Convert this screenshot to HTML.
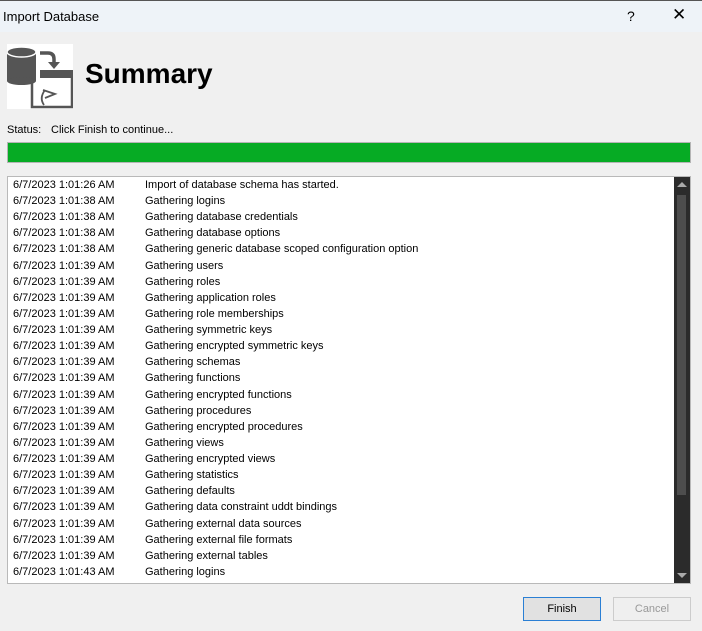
<!DOCTYPE html><html><head><style>
body{margin:0;width:702px;height:631px;background:#f0f0f0;font-family:"Liberation Sans",sans-serif;position:relative;overflow:hidden}
.t{position:absolute;left:0;top:0;width:702px;height:31px;background:#eef3f8;border-top:1px solid #555}
.a{position:absolute}
.list{position:absolute;left:7px;top:176px;width:682px;height:406px;background:#fff;border:1px solid #b9b9b9}
.r{position:absolute;font-size:11px;color:#000;white-space:nowrap}
.btn{position:absolute;top:597px;width:76px;height:22px;border:1px solid #ccc;background:#e5e5e5;font-size:11px;text-align:center;line-height:22px}
</style></head><body>
<div class="t"><span class="a" style="left:3px;top:8px;font-size:13px">Import Database</span>
<span class="a" style="left:627px;top:7px;font-size:14px">?</span>
<span class="a" style="left:672px;top:4px;font-size:17px">✕</span></div>
<div class="a" style="left:7px;top:44px;width:66px;height:65px;background:#fff">
<svg width="66" height="65">
<rect x="0" y="8" width="29" height="29" fill="#555"/><ellipse cx="14.5" cy="37" rx="14.5" ry="4" fill="#555"/><ellipse cx="14.5" cy="8" rx="14.5" ry="5" fill="#555" stroke="#fff" stroke-width="1.5"/>
<path d="M33 9h8q6 0 6 6v4" stroke="#555" stroke-width="3.5" fill="none"/><path d="M41 18h12l-6 7z" fill="#555"/>
<rect x="33" y="26" width="33" height="8" fill="#555"/>
<path d="M25 36v27h40V34" stroke="#555" stroke-width="2.5" fill="none"/>
<path d="M36 46l12 4-10 4" stroke="#555" stroke-width="1.8" fill="none"/><path d="M38 46q-6 8-1 15" stroke="#555" stroke-width="1.8" fill="none"/></svg></div>
<div class="a" style="left:85px;top:58px;font-size:28px;font-weight:bold">Summary</div>
<div class="a" style="left:7px;top:124px;font-size:11px">Status:</div>
<div class="a" style="left:51px;top:124px;font-size:11px">Click Finish to continue...</div>
<div class="a" style="left:7px;top:142px;width:682px;height:19px;background:#06ab24;border:1px solid #b5b5b5"></div>
<div class="list">
<div class="a" style="left:666px;top:0;width:16px;height:406px;background:#2b2b2b"><div class="a" style="left:3px;top:18px;width:9px;height:300px;background:#4d4d4d"></div>
<div class="a" style="left:3px;top:5px;border:5px solid transparent;border-bottom:5px solid #aaa;border-top:0"></div>
<div class="a" style="left:3px;top:396px;border:5px solid transparent;border-top:5px solid #aaa;border-bottom:0"></div></div>
<div id="rows"></div></div>
<div class="btn" style="left:523px;border-color:#2a7fd4;background:#e1e1e1">Finish</div>
<div class="btn" style="left:613px;color:#999;background:#efefef">Cancel</div>
<script>
var m=["Import of database schema has started.","Gathering logins","Gathering database credentials","Gathering database options","Gathering generic database scoped configuration option","Gathering users","Gathering roles","Gathering application roles","Gathering role memberships","Gathering symmetric keys","Gathering encrypted symmetric keys","Gathering schemas","Gathering functions","Gathering encrypted functions","Gathering procedures","Gathering encrypted procedures","Gathering views","Gathering encrypted views","Gathering statistics","Gathering defaults","Gathering data constraint uddt bindings","Gathering external data sources","Gathering external file formats","Gathering external tables","Gathering logins"];
var h="";m.forEach(function(s,i){var t=i==0?"1:01:26":i<5?"1:01:38":i==24?"1:01:43":"1:01:39";var y=2+i*16.12;
h+='<div class="r" style="left:5px;top:'+y+'px">6/7/2023 '+t+' AM</div><div class="r" style="left:137px;top:'+y+'px">'+s+'</div>';});
document.getElementById("rows").innerHTML=h;
</script></body></html>
